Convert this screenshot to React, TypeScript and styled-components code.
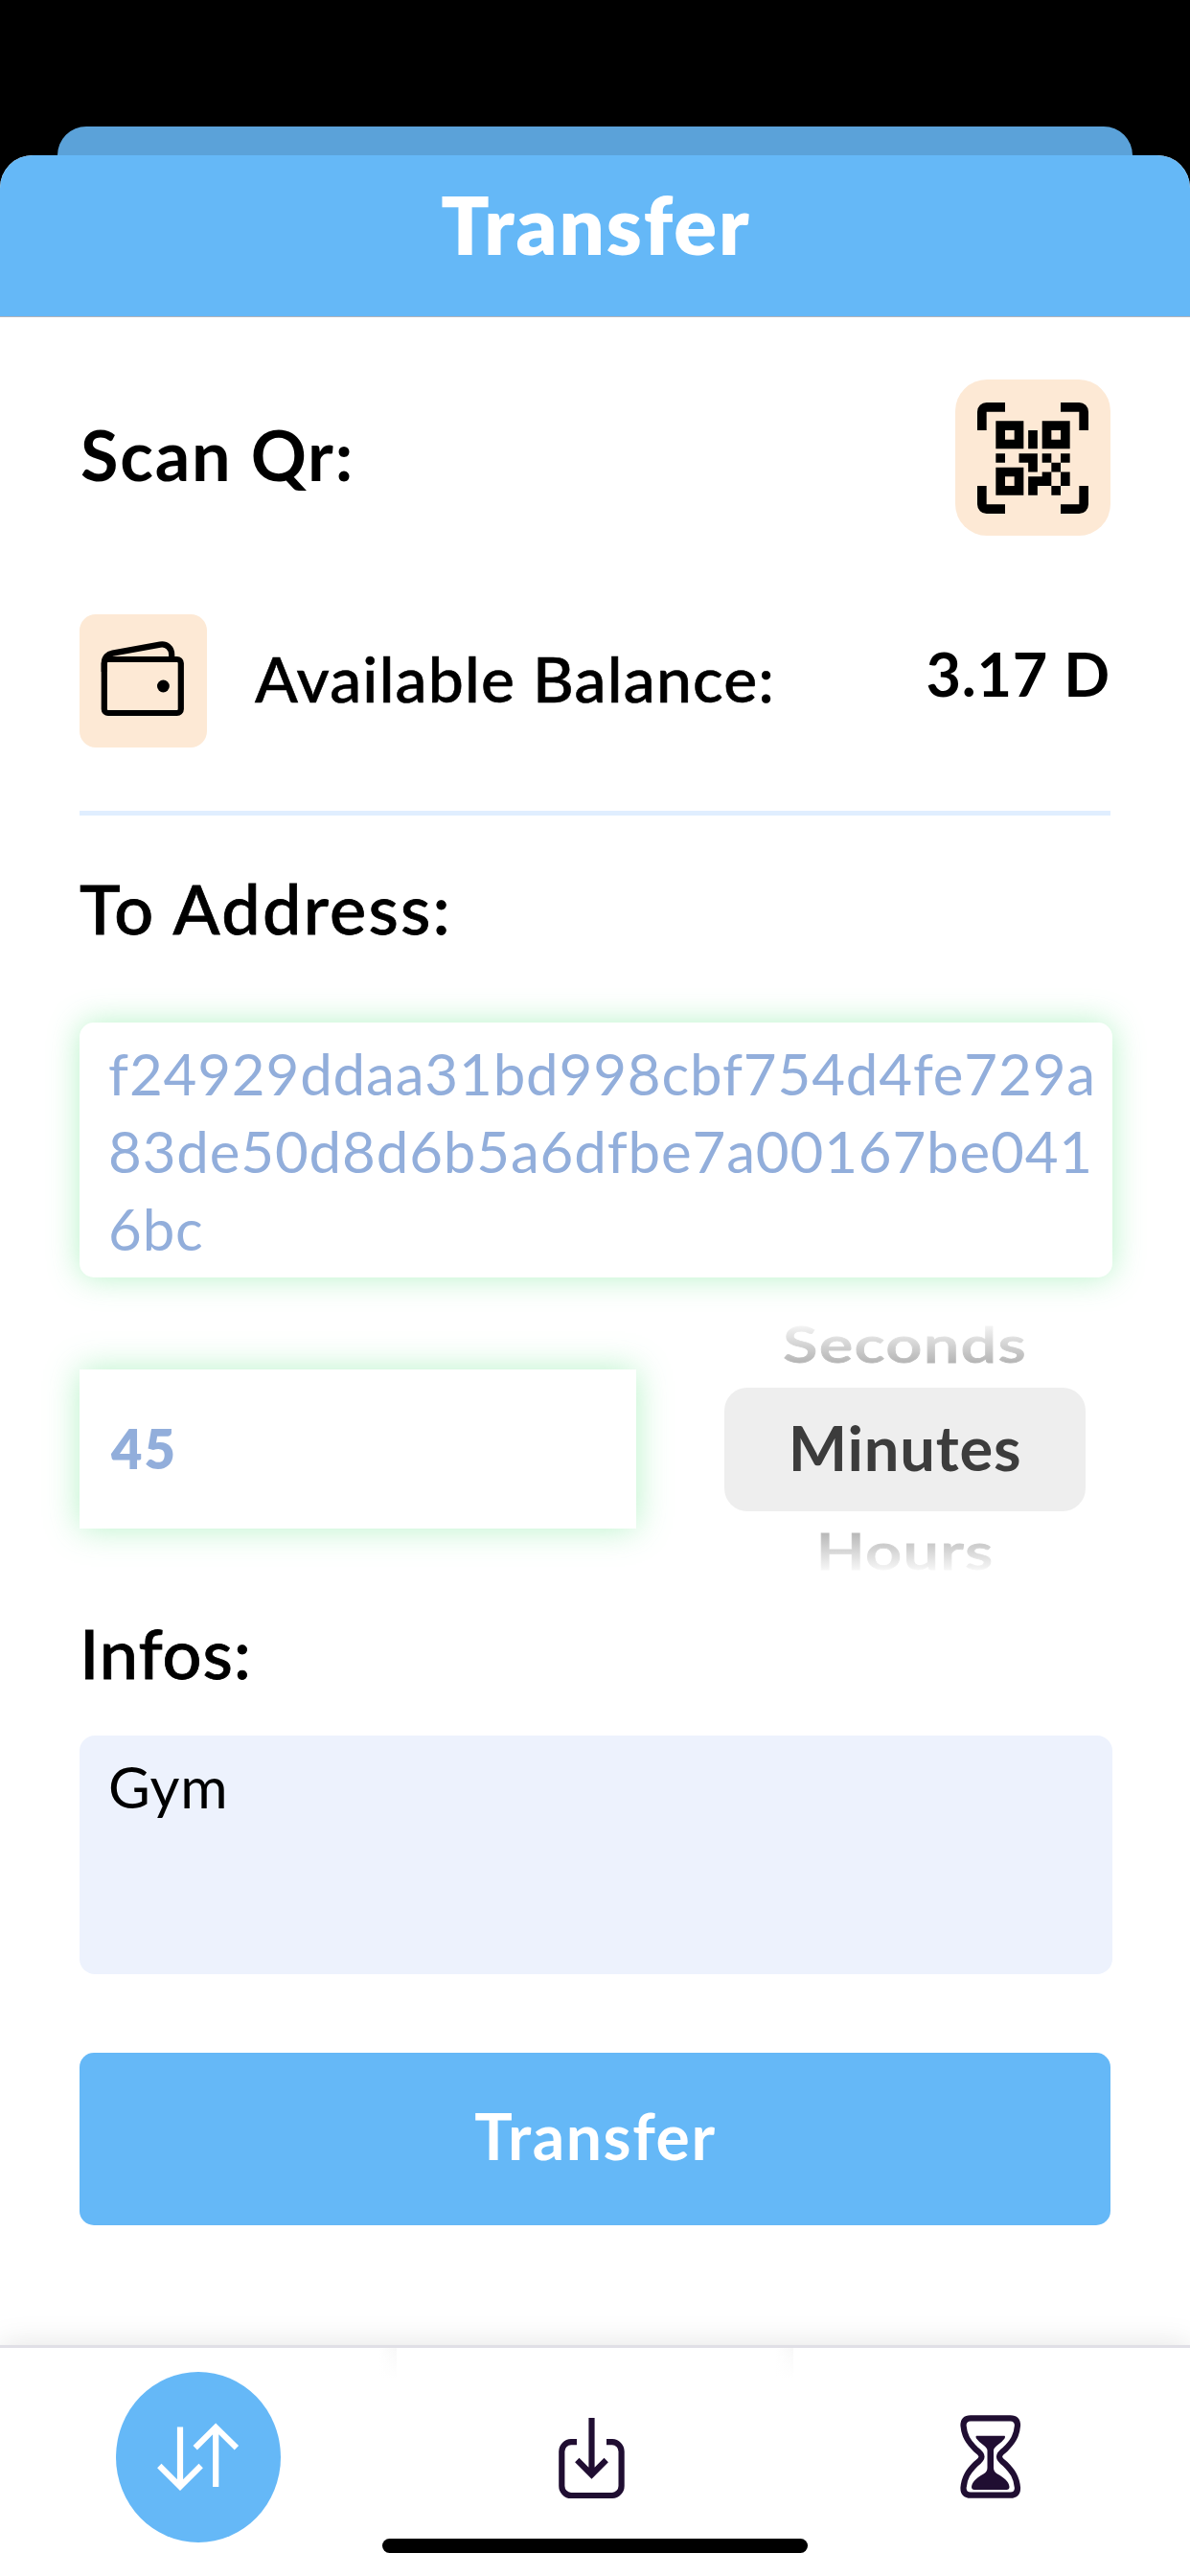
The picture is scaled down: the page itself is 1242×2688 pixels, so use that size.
import React from "react";
import styled, { createGlobalStyle, css } from "styled-components";

const colors = {
  sky: "#65b8f7",
  skyDim: "#5ba2d9",
  peach: "#fde9d5",
  address: "#92aedb",
  ink: "#200e32",
};

const GlobalStyle = createGlobalStyle`
  *, *::before, *::after { box-sizing: border-box; }
  body { margin: 0; background: #000; }
  button { border: 0; padding: 0; margin: 0; font: inherit; color: inherit; background: none; }
`;

const Screen = styled.div`
  display: flex;
  flex-direction: column;
  width: 1242px;
  height: 2688px;
  padding-top: 132px;
  overflow: hidden;
  background: #000;
  color: #000;
  font-family: Lato, "Open Sans", sans-serif;
  font-weight: 500;
`;

const BackCard = styled.div`
  flex: none;
  height: 30px;
  margin: 0 60px;
  border-radius: 30px 30px 0 0;
  background: ${colors.skyDim};
`;

const Sheet = styled.div`
  flex: 1;
  display: flex;
  flex-direction: column;
  overflow: hidden;
  border-radius: 34px 34px 0 0;
  background: #fff;
`;

const Header = styled.header`
  flex: none;
  height: 169px;
  border-bottom: 1px solid #b2b4bb;
  background: ${colors.sky};
`;

const Title = styled.h1`
  margin: 0;
  padding: 1px 0 0 2px;
  color: #fff;
  font-size: 83px;
  font-weight: 800;
  line-height: 142px;
  letter-spacing: 2px;
  text-align: center;
`;

const Form = styled.main`
  flex: 1;
  display: flex;
  flex-direction: column;
  padding: 65px 83px 0;
`;

const ScanRow = styled.section`
  display: flex;
  align-items: center;
  justify-content: space-between;
`;

const Label = styled.div<{ $bold?: boolean }>`
  font-size: 72px;
  font-weight: ${(p) => (p.$bold ? 700 : 500)};
  line-height: 86px;
  letter-spacing: ${(p) => (p.$bold ? 1.8 : 2.3)}px;
  -webkit-text-stroke: ${(p) => (p.$bold ? 0 : 0.8)}px currentColor;
`;

const ScanLabel = styled(Label)`
  padding: 0 0 8px 1px;
`;

const AddressLabel = styled(Label)`
  margin-top: 53px;
`;

const InfoLabel = styled(Label)`
  margin-top: 38px;
  letter-spacing: 0.9px;
`;

const QrButton = styled.button`
  display: grid;
  place-items: center;
  width: 162px;
  height: 163px;
  border-radius: 33px;
  background: ${colors.peach};
`;

const BalanceRow = styled.section`
  display: flex;
  align-items: center;
  height: 139px;
  margin-top: 82px;
`;

const WalletTile = styled.div`
  flex: none;
  width: 133px;
  height: 139px;
  border-radius: 17px;
  background: ${colors.peach};
`;

const BalanceLabel = styled.div`
  flex: 1;
  padding: 0 0 6px 50px;
  font-size: 66px;
  letter-spacing: 1.2px;
  -webkit-text-stroke: 0.6px currentColor;
`;

const BalanceValue = styled.div`
  padding-bottom: 17px;
  font-size: 63px;
  font-weight: 700;
  letter-spacing: 0.8px;
`;

const Divider = styled.hr`
  width: 100%;
  height: 5px;
  margin: 66px 0 0;
  border: 0;
  background: #e0eeff;
`;

const glow = css`
  background: #fff;
  box-shadow: 0 0 33px rgba(75, 226, 118, 0.4);
`;

const fieldText = css`
  font-size: 60px;
  font-weight: 400;
  line-height: 81px;
  letter-spacing: 0.85px;
  word-break: break-all;
`;

const AddressField = styled.div`
  ${glow}
  ${fieldText}
  width: 1078px;
  height: 266px;
  margin-top: 77px;
  padding: 13px 16px 0 30px;
  border-radius: 15px;
  color: ${colors.address};
`;

const AmountRow = styled.section`
  display: flex;
  align-items: center;
  gap: 92px;
  height: 262px;
  margin-top: 48px;
`;

const AmountField = styled.div`
  ${glow}
  width: 581px;
  height: 166px;
  padding: 0 0 2px 33px;
  color: ${colors.address};
  font-size: 56px;
  font-weight: 800;
  line-height: 166px;
  letter-spacing: 2px;
`;

const Picker = styled.div`
  display: grid;
  grid-template-rows: 67px 129px 66px;
  width: 377px;
  text-align: center;
  font-size: 67px;
  font-weight: 600;
  letter-spacing: 1.2px;
`;

const PickerSelected = styled.div`
  border-radius: 24px;
  background: #eee;
  color: #3c3c3c;
  font-size: 65px;
  font-weight: 700;
  line-height: 125px;
  letter-spacing: 0.8px;
`;

const PickerOption = styled.div<{ $fade: "up" | "down" }>`
  height: 80px;
  line-height: 80px;
  margin-top: ${(p) => (p.$fade === "up" ? -19 : 1)}px;
  transform: scaleY(0.78);
  color: transparent;
  -webkit-text-stroke: 1px transparent;
  background-image: linear-gradient(
    ${(p) => (p.$fade === "up" ? "to bottom" : "to top")},
    #f8f8f8 16%,
    #b5b5b5 82%
  );
  background-clip: text;
  -webkit-background-clip: text;
`;

const InfoField = styled.div`
  ${fieldText}
  width: 1078px;
  height: 249px;
  margin-top: 44px;
  padding: 13px 16px 0 30px;
  border-radius: 16px;
  background: #edf2fd;
`;

const SubmitButton = styled.button`
  height: 180px;
  margin-top: 82px;
  padding: 0 0 7px 1px;
  border-radius: 15px;
  background: ${colors.sky};
  color: #fff;
  font-size: 66px;
  font-weight: 700;
  letter-spacing: 1.6px;
`;

const TabBar = styled.nav`
  flex: none;
  position: relative;
  display: grid;
  grid-template-columns: repeat(3, 1fr);
  height: 241px;
  border-top: 3px solid #e0dfe6;
  background: #fff;
  box-shadow: 0 -2px 30px rgba(0, 0, 0, 0.1);
`;

const Tab = styled.button<{ $shaded?: boolean }>`
  position: relative;
  display: flex;
  justify-content: center;
  align-items: flex-start;
  padding-top: 25px;

  ${(p) =>
    p.$shaded &&
    css`
      &::after {
        content: "";
        position: absolute;
        top: 0;
        right: 0;
        width: 18px;
        height: 32px;
        background: linear-gradient(to top, #fff, transparent),
          linear-gradient(to left, #f8f8f8, #fff);
      }
    `}
`;

const ActiveDisc = styled.span`
  display: grid;
  width: 172px;
  height: 178px;
  border-radius: 50%;
  background: ${colors.sky};
`;

const ReceiveGlyph = styled.span`
  display: block;
  margin: 45px 9px 0 0;
`;

const HistoryGlyph = styled.span`
  display: block;
  margin: 43px 2px 0 0;
`;

const HomeIndicator = styled.div`
  position: absolute;
  left: 399px;
  bottom: 24px;
  width: 444px;
  height: 15px;
  border-radius: 8px;
  background: #000;
`;

const QrIcon = () => (
  <svg width="116" height="116" viewBox="0 0 24 24" fill="#000" fillRule="evenodd">
    <path d="M2 0h4v2H2v4H0V2a2 2 0 0 1 2-2zM18 0h4a2 2 0 0 1 2 2v4h-2V2h-4zM0 18h2v4h4v2H2a2 2 0 0 1-2-2zM22 18h2v4a2 2 0 0 1-2 2h-4v-2h4z" />
    <path d="M4 4h6v6H4zM6 6v2h2V6zM14 4h6v6h-6zM16 6v2h2V6zM4 14h6v6H4zM6 16v2h2v-2z" />
    <path d="M11 6h2v4h-2zM4 11h2v2H4zM9 11h4v4h-2v-2H9zM14 11h2v2h-2zM18 11h2v2h-2zM16 13h2v2h-2zM14 15h2v3h-3v2h-2v-4h3zM18 15h2v3h-2zM16 18h2v2h-2z" />
  </svg>
);

const WalletIcon = () => (
  <svg width="133" height="139" viewBox="0 0 133 139" fill="none" stroke="#000" strokeWidth="6.2">
    <rect x="25.8" y="47" width="80" height="56" rx="4" />
    <path d="M25.8 60V51C25.8 45 29.5 41.5 34.5 40.6L84 31.6C91 30.3 96.2 35.5 96.2 42V46" />
    <circle cx="87.4" cy="75" r="6.4" fill="#000" stroke="none" />
  </svg>
);

const SwapIcon = () => (
  <svg width="172" height="178" viewBox="0 0 172 178" fill="none" stroke="#fff" strokeWidth="6.2">
    <path d="M67 57.5V119M45.3 98L67 119.7L88.7 98" />
    <path d="M104.2 120V58M82.7 79.3L104.2 57.8L125.9 79.3" />
  </svg>
);

const ReceiveIcon = () => (
  <svg width="72" height="90" viewBox="40 40 72 90" fill="none" stroke={colors.ink} strokeWidth="6.2">
    <path d="M61 68.2H55A10 10 0 0 0 45.3 78V114A10 10 0 0 0 55 124H98A10 10 0 0 0 107.6 114V78A10 10 0 0 0 98 68.2H92" />
    <path d="M76.5 43V102M61.3 87L76.5 102.3L91.7 87" />
  </svg>
);

const HourglassIcon = () => (
  <svg width="68" height="92" viewBox="40 38 68 92" fill="none" stroke={colors.ink}>
    <path
      strokeWidth="6.2"
      d="M53 43.3H94.5Q102 43.3 102 51C101 62 97 68 89 76Q83 80.5 83 83.5Q83 86.5 89 91C97 99 101 105 102 116Q102 123.7 94.5 123.7H53Q45.5 123.7 45.5 116C46.5 105 50.5 99 58.5 91Q64.5 86.5 64.5 83.5Q64.5 80.5 58.5 76C50.5 68 46.5 62 45.5 51Q45.5 43.3 53 43.3Z"
    />
    <path
      fill={colors.ink}
      stroke="none"
      d="M59 61.8H88.5Q89.5 62.5 88.5 64.5Q86 68 81 71.5Q77 74.5 77 77V95Q77 99 81 101.5C87 105 93 109 93.5 115Q93.5 118 90.5 118H57Q54 118 54 115C54.5 109 60.5 105 66.5 101.5Q70.5 99 70.5 95V77Q70.5 74.5 66.5 71.5Q61.5 68 59 64.5Q58 62.5 59 61.8Z"
    />
  </svg>
);

export default function App() {
  return (
    <Screen>
      <GlobalStyle />
      <BackCard />
      <Sheet>
        <Header>
          <Title>Transfer</Title>
        </Header>
        <Form>
          <ScanRow>
            <ScanLabel $bold>Scan Qr:</ScanLabel>
            <QrButton aria-label="Scan Qr">
              <QrIcon />
            </QrButton>
          </ScanRow>
          <BalanceRow>
            <WalletTile>
              <WalletIcon />
            </WalletTile>
            <BalanceLabel>Available Balance:</BalanceLabel>
            <BalanceValue>3.17 D</BalanceValue>
          </BalanceRow>
          <Divider />
          <AddressLabel>To Address:</AddressLabel>
          <AddressField>f24929ddaa31bd998cbf754d4fe729a83de50d8d6b5a6dfbe7a00167be0416bc</AddressField>
          <AmountRow>
            <AmountField>45</AmountField>
            <Picker>
              <PickerOption $fade="up">Seconds</PickerOption>
              <PickerSelected>Minutes</PickerSelected>
              <PickerOption $fade="down">Hours</PickerOption>
            </Picker>
          </AmountRow>
          <InfoLabel>Infos:</InfoLabel>
          <InfoField>Gym</InfoField>
          <SubmitButton>Transfer</SubmitButton>
        </Form>
        <TabBar>
          <Tab $shaded aria-label="Transfer">
            <ActiveDisc>
              <SwapIcon />
            </ActiveDisc>
          </Tab>
          <Tab $shaded aria-label="Receive">
            <ReceiveGlyph>
              <ReceiveIcon />
            </ReceiveGlyph>
          </Tab>
          <Tab aria-label="History">
            <HistoryGlyph>
              <HourglassIcon />
            </HistoryGlyph>
          </Tab>
          <HomeIndicator />
        </TabBar>
      </Sheet>
    </Screen>
  );
}
